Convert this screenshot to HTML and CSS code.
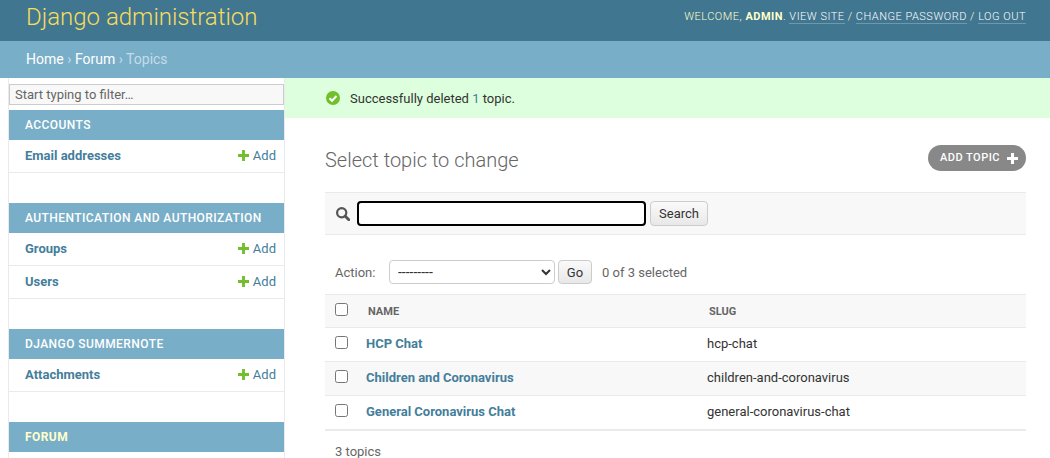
FILE: index.html
```html
<!DOCTYPE html>
<html lang="en">
<head>
<meta charset="UTF-8">
<meta name="viewport" content="width=device-width, initial-scale=1.0">
<title>Select topic to change | Django site admin</title>
<link rel="stylesheet" href="styles.css">
</head>
<body>
<div class="header">
    <div class="branding">Django administration</div>
    <div class="user-tools">
        Welcome, <strong>admin</strong>.
        <a href="#">View site</a> /
        <a href="#">Change password</a> /
        <a href="#">Log out</a>
    </div>
</div>
<div class="breadcrumbs">
    <a href="#">Home</a> <span class="sep">›</span> <a href="#">Forum</a> <span class="sep">›</span> Topics
</div>
<div class="main">
    <div class="sidebar">
        <input class="nav-filter" type="text" placeholder="Start typing to filter…">
        <div class="app">
            <div class="caption">Accounts</div>
            <div class="model"><a class="model-name" href="#">Email addresses</a><a class="add" href="#"><svg class="plus" viewBox="0 0 10 10"><path d="M3.700 0h2.600v3.700H10v2.600H6.300V10H3.700V6.300H0V3.700h3.700z"/></svg>Add</a></div>
        </div>
        <div class="app">
            <div class="caption">Authentication and Authorization</div>
            <div class="model"><a class="model-name" href="#">Groups</a><a class="add" href="#"><svg class="plus" viewBox="0 0 10 10"><path d="M3.700 0h2.600v3.700H10v2.600H6.300V10H3.700V6.300H0V3.700h3.700z"/></svg>Add</a></div>
            <div class="model"><a class="model-name" href="#">Users</a><a class="add" href="#"><svg class="plus" viewBox="0 0 10 10"><path d="M3.700 0h2.600v3.700H10v2.600H6.300V10H3.700V6.300H0V3.700h3.700z"/></svg>Add</a></div>
        </div>
        <div class="app">
            <div class="caption">Django Summernote</div>
            <div class="model"><a class="model-name" href="#">Attachments</a><a class="add" href="#"><svg class="plus" viewBox="0 0 10 10"><path d="M3.700 0h2.600v3.700H10v2.600H6.300V10H3.700V6.300H0V3.700h3.700z"/></svg>Add</a></div>
        </div>
        <div class="app">
            <div class="caption current">Forum</div>
        </div>
    </div>
    <div class="content">
        <div class="message">
            <svg class="check" viewBox="0 0 14 14"><circle cx="7" cy="7" r="7" fill="#70bf2b"/><path d="M3.500 7.200l2.500 2.500 4.500-4.700" fill="none" stroke="#fff" stroke-width="2"/></svg>
            <span>Successfully deleted <a href="#">1</a> topic.</span>
        </div>
        <div class="inner">
            <div class="title-row">
                <h1>Select topic to change</h1>
                <a class="addlink" href="#">Add topic<svg class="plus-white" viewBox="0 0 10 10"><path d="M3.600 0h2.800v3.600H10v2.800H6.400V10H3.600V6.400H0V3.600h3.600z"/></svg></a>
            </div>
            <div class="toolbar">
                <svg class="search-icon" viewBox="0 0 14 14"><circle cx="5.700" cy="5.700" r="4.600" fill="none" stroke="#555" stroke-width="2.200"/><path d="M9 9l3.800 3.800" stroke="#555" stroke-width="2.800" stroke-linecap="round"/></svg>
                <input class="search-box" type="text">
                <button class="btn search-btn">Search</button>
            </div>
            <div class="actions">
                <label>Action:</label>
                <select class="action-select"><option>---------</option></select>
                <button class="btn go-btn">Go</button>
                <span class="counter">0 of 3 selected</span>
            </div>
            <table class="results">
                <thead>
                    <tr><th class="check-col"><input type="checkbox"></th><th class="name-col">Name</th><th>Slug</th></tr>
                </thead>
                <tbody>
                    <tr><td class="check-col"><input type="checkbox"></td><td class="name-col"><a href="#">HCP Chat</a></td><td>hcp-chat</td></tr>
                    <tr class="alt"><td class="check-col"><input type="checkbox"></td><td class="name-col"><a href="#">Children and Coronavirus</a></td><td>children-and-coronavirus</td></tr>
                    <tr><td class="check-col"><input type="checkbox"></td><td class="name-col"><a href="#">General Coronavirus Chat</a></td><td>general-coronavirus-chat</td></tr>
                </tbody>
            </table>
            <div class="paginator">3 topics</div>
        </div>
    </div>
</div>
</body>
</html>
```

FILE: styles.css
```css
html, body {
    height: 100%;
    overflow: hidden;
}

body {
    margin: 0;
    padding: 0;
    font-family: Roboto, "Liberation Sans", sans-serif;
    font-size: 14px;
    color: #333;
    background: #fff;
}

a {
    color: #447e9b;
    text-decoration: none;
}

/* header */
.header {
    display: flex;
    justify-content: space-between;
    height: 41px;
    padding: 0 24px 0 26px;
    background: #417690;
    color: #ffc;
    box-sizing: border-box;
}

.branding {
    font-size: 24px;
    font-weight: 300;
    line-height: 34px;
    color: #f5dd5d;
}

.user-tools {
    font-size: 11px;
    line-height: 33px;
    letter-spacing: 0.5px;
    text-transform: uppercase;
    font-weight: 300;
}

.user-tools strong {
    font-weight: 700;
}

.user-tools a {
    color: #fff;
    border-bottom: 1px solid rgba(255, 255, 255, 0.25);
}

.breadcrumbs {
    height: 37px;
    padding-left: 26px;
    background: #79aec8;
    color: #c4dce8;
    font-size: 14px;
    line-height: 37px;
}

.breadcrumbs a {
    color: #fff;
}

/* sidebar */
.main {
    display: flex;
}

.sidebar {
    flex: none;
    width: 275px;
    margin-left: 8px;
    padding-top: 6px;
    border-left: 1px solid #eaeaea;
    border-right: 1px solid #eaeaea;
    height: 380px;
}

.nav-filter {
    display: block;
    box-sizing: border-box;
    width: 275px;
    height: 21px;
    padding: 0 5px;
    margin-bottom: 5px;
    border: 1px solid #ccc;
    border-radius: 0;
    background: #f8f8f8;
    font-family: inherit;
    font-size: 13px;
    color: #333;
    outline: none;
}

.nav-filter::placeholder {
    color: #666;
}

.app {
    margin-bottom: 30px;
}

.caption {
    height: 30px;
    padding-left: 16px;
    background: #79aec8;
    color: #fff;
    font-size: 12px;
    font-weight: 500;
    line-height: 30px;
    letter-spacing: 0.43px;
    text-transform: uppercase;
}

.caption.current {
    color: #ffc;
    font-weight: 700;
}

.model {
    display: flex;
    justify-content: space-between;
    box-sizing: border-box;
    height: 33px;
    padding: 0 8px 0 16px;
    border-bottom: 1px solid #eaeaea;
    font-size: 13px;
    line-height: 31px;
}

.model-name {
    font-weight: 700;
}

.add {
    display: flex;
    align-items: center;
    height: 31px;
}

.plus {
    width: 11px;
    height: 11px;
    margin-right: 4px;
    fill: #70bf2b;
}

/* content */
.content {
    flex: 1;
    min-width: 0;
}

.message {
    display: flex;
    align-items: center;
    gap: 10px;
    height: 40px;
    padding-left: 41px;
    background: #dfd;
    font-size: 13px;
}

.check {
    width: 14px;
    height: 14px;
}

.inner {
    padding: 0 24px 0 40px;
}

.title-row {
    display: flex;
    justify-content: space-between;
    align-items: flex-start;
    height: 74px;
    padding-top: 27px;
    box-sizing: border-box;
}

h1 {
    margin: 0;
    font-size: 20px;
    font-weight: 300;
    line-height: 31px;
    color: #666;
}

.addlink {
    display: flex;
    align-items: center;
    gap: 7px;
    box-sizing: border-box;
    height: 26px;
    padding: 0 8px 2px 12px;
    border-radius: 13px;
    background: #888;
    color: #fff;
    font-size: 11px;
    font-weight: 500;
    letter-spacing: 0.5px;
    text-transform: uppercase;
}

.plus-white {
    width: 11px;
    height: 11px;
    margin-top: 2px;
    fill: #fff;
}

.toolbar {
    display: flex;
    align-items: center;
    box-sizing: border-box;
    height: 43px;
    padding-left: 11px;
    background: #f8f8f8;
    border-top: 1px solid #eaeaea;
    border-bottom: 1px solid #eaeaea;
}

.search-icon {
    width: 14px;
    height: 14px;
    margin-right: 7px;
}

.search-box {
    box-sizing: border-box;
    width: 289px;
    height: 25px;
    margin-right: 4px;
    border: 2px solid #000;
    border-radius: 4px;
    background: #fff;
    outline: none;
}

.btn {
    box-sizing: border-box;
    height: 25px;
    border: 1px solid #ccc;
    border-radius: 4px;
    background: linear-gradient(#fafafa, #e8e8e8);
    font-family: inherit;
    font-size: 13px;
    color: #333;
}

.search-btn {
    width: 58px;
}

.actions {
    display: flex;
    align-items: center;
    height: 59px;
    padding: 25px 0 10px 10px;
    box-sizing: border-box;
    font-size: 13px;
    color: #666;
}

.actions label {
    width: 54px;
}

.action-select {
    box-sizing: border-box;
    width: 166px;
    height: 24px;
    padding: 0 4px;
    margin-right: 3px;
    border: 1px solid #ccc;
    border-radius: 4px;
    background: #fff;
    font-family: inherit;
    font-size: 14px;
    color: #333;
}

.go-btn {
    width: 34px;
    height: 24px;
    margin-right: 10px;
}

.results {
    width: 100%;
    border-collapse: separate;
    border-spacing: 0;
    font-size: 13px;
}

.results th {
    height: 32px;
    padding: 0;
    background: #f8f8f8;
    border-top: 1px solid #eaeaea;
    border-bottom: 1px solid #eaeaea;
    color: #666;
    font-size: 11px;
    font-weight: 700;
    text-align: left;
    text-transform: uppercase;
}

.results th.name-col,
.results th:last-child {
    padding-left: 2px;
}

.results th input {
    margin-bottom: 3px;
}

.results td {
    height: 31px;
    padding: 0 0 2px;
    border-bottom: 1px solid #eaeaea;
}

.results tbody tr:last-child td {
    border-bottom: 2px solid #eaeaea;
}

.results td a {
    font-weight: 700;
}

.results tr.alt td {
    background: #f8f8f8;
}

.results input {
    display: block;
    width: 13px;
    height: 13px;
    margin-top: 0;
    margin-right: 0;
    margin-left: 10px;
}

.check-col {
    width: 41px;
}

.name-col {
    width: 339px;
}

.paginator {
    height: 42px;
    padding-left: 10px;
    font-size: 13px;
    line-height: 41px;
    color: #666;
}
```
